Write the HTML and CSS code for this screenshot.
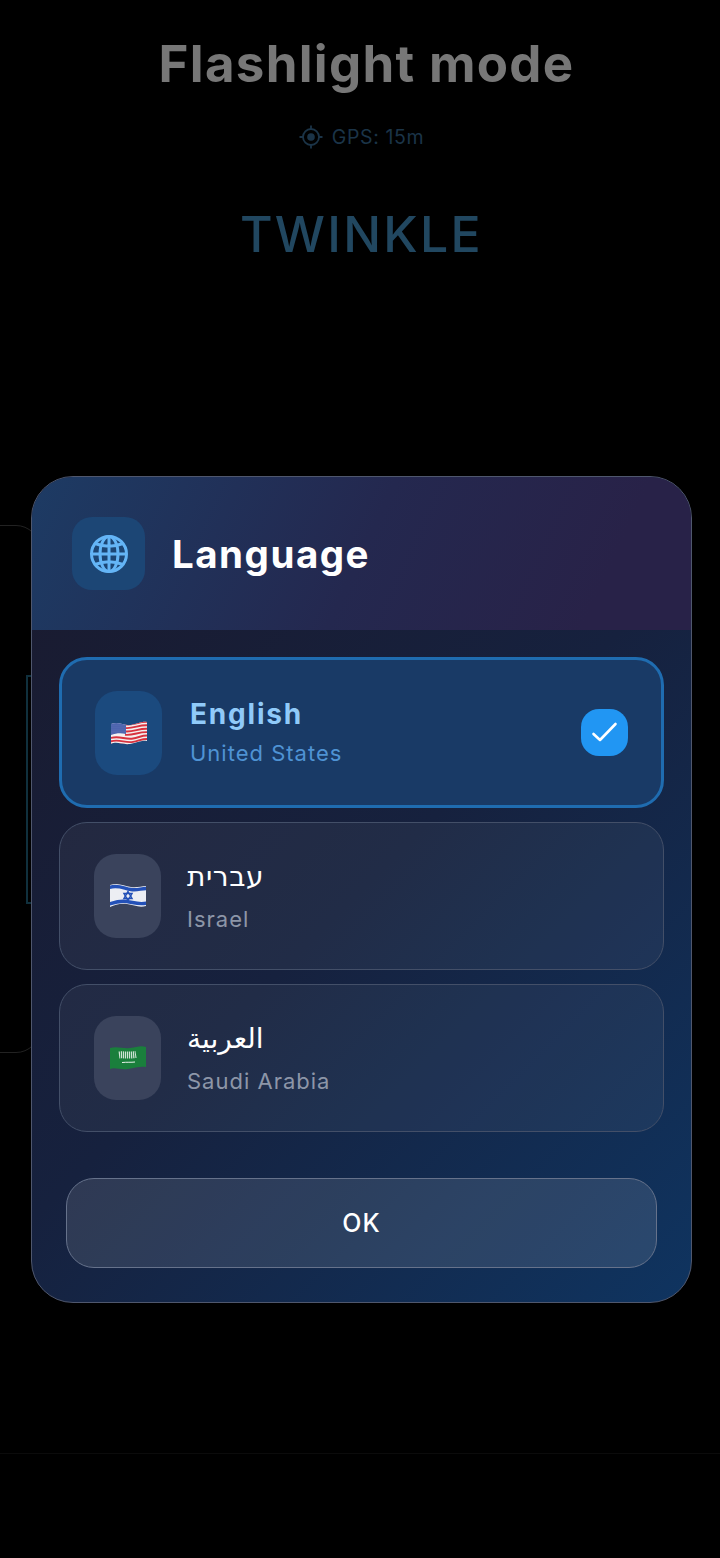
FILE: index.html
```html
<!DOCTYPE html>
<html>

<head>
    <meta charset="utf-8">
    <title>Language</title>
    <link rel="stylesheet" href="styles.css">
</head>

<body>
    <div class="screen">
        <h1 class="mode-title">Flashlight mode</h1>
        <div class="gps">
            <svg class="gps-icon" viewBox="0 0 24 24" fill="none" stroke="currentColor" stroke-width="1.800">
                <circle cx="12" cy="12" r="8"></circle>
                <circle cx="12" cy="12" r="3.8" fill="currentColor" stroke="none"></circle>
                <path d="M12 0.5v3.5M12 20v3.5M0.5 12h3.5M20 12h3.5"></path>
            </svg>
            <span>GPS: 15m</span>
        </div>
        <div class="pattern">TWINKLE</div>

        <div class="back-card"></div>
        <div class="back-bar"></div>
        <div class="bottom-line"></div>
    </div>

    <div class="overlay">
        <div class="dialog">
            <div class="dialog-head">
                <div class="head-icon">
                    <svg viewBox="0 0 40 40" fill="none" stroke="#64b5f6" stroke-width="3">
                        <circle cx="20" cy="20" r="17.5"></circle>
                        <ellipse cx="20" cy="20" rx="9" ry="17.5"></ellipse>
                        <path d="M20 2.5v35M2.500 20h35M6 9.500Q20 15 34 9.500M6 30.500Q20 25 34 30.500"></path>
                    </svg>
                </div>
                <h2 class="head-title">Language</h2>
            </div>

            <div class="dialog-body">
                <div class="lang selected">
                    <div class="flag-box">
                        <svg class="flag" viewBox="0 0 36 26">
                            <defs>
                                <clipPath id="usClip">
                                    <path d="M0 4C8 1 12 6 20 5C27 4 31 1 36 2V21C30 20 26 23 19 24C11 25 6 21 0 24Z"></path>
                                </clipPath>
                                <pattern id="usStars" width="2" height="2" patternUnits="userSpaceOnUse">
                                    <circle cx="1" cy="1" r="0.45" fill="#c9d3f0"></circle>
                                </pattern>
                            </defs>
                            <g clip-path="url(#usClip)">
                                <rect width="36" height="26" fill="#f4f0f0"></rect>
                                <g fill="none" stroke="#d8323f" stroke-width="1.900">
                                    <path d="M14 4.500C22 5.500 29 1 37 2"></path>
                                    <path d="M14 8C22 9 29 4.400 37 5.400"></path>
                                    <path d="M14 11.400C22 12.400 29 7.800 37 8.800"></path>
                                    <path d="M14 14.800C22 15.800 29 11.200 37 12.200"></path>
                                    <path d="M-1 18.200C8 15 14 20 22 18.500C28 17.400 32 15 37 15.600"></path>
                                    <path d="M-1 21.600C8 18.400 14 23.400 22 21.900C28 20.800 32 18.400 37 19"></path>
                                    <path d="M-1 25C8 21.800 14 26.800 22 25.300C28 24.200 32 21.800 37 22.400"></path>
                                </g>
                                <path d="M0 0H15V14C10 12.500 5 13 0 15Z" fill="#3f56a6"></path>
                                <path d="M0 0H15V14C10 12.500 5 13 0 15Z" fill="url(#usStars)"></path>
                            </g>
                        </svg>
                    </div>
                    <div class="lang-text">
                        <div class="lang-name">English</div>
                        <div class="lang-place">United States</div>
                    </div>
                    <div class="check">
                        <svg viewBox="0 0 47 47" fill="none" stroke="#fff" stroke-width="2.600" stroke-linecap="round" stroke-linejoin="round">
                            <path d="M12.500 25L19 31L34.500 15"></path>
                        </svg>
                    </div>
                </div>

                <div class="lang">
                    <div class="flag-box">
                        <svg class="flag" viewBox="0 0 36 26">
                            <defs>
                                <clipPath id="ilClip">
                                    <path d="M0 2C8 -1 14 3 21 4C27 5 31 3 36 3V23C29 25 24 22 17 21C10 20 5 22 0 24Z"></path>
                                </clipPath>
                            </defs>
                            <g clip-path="url(#ilClip)">
                                <rect width="36" height="26" fill="#eceef3"></rect>
                                <g fill="none" stroke="#2451b7" stroke-width="3.400">
                                    <path d="M-1 4.500C8 1.500 14 5.500 21 6.500C27 7.500 31 5.500 37 5.500"></path>
                                    <path d="M-1 21C5 19 10 17.500 17 18.500C24 19.500 29 22 37 20"></path>
                                </g>
                                <g fill="none" stroke="#2451b7" stroke-width="1.500">
                                    <path d="M18 8.500L22 15.500H14Z"></path>
                                    <path d="M18 17.500L22 10.500H14Z"></path>
                                </g>
                            </g>
                        </svg>
                    </div>
                    <div class="lang-text">
                        <div class="lang-name" dir="rtl">עברית</div>
                        <div class="lang-place">Israel</div>
                    </div>
                </div>

                <div class="lang">
                    <div class="flag-box">
                        <svg class="flag" viewBox="0 0 36 26">
                            <path d="M0 3C8 1 13 4 20 3C27 2 31 0 36 2V22C30 21 25 23 18 24C10 25 5 22 0 24Z" fill="#1a7f3c"></path>
                            <path d="M9 10C13 9.500 20 10.500 26 9.500" fill="none" stroke="#cfe3d4" stroke-width="7" stroke-dasharray="1.200 0.800"></path>
                            <path d="M12 17.500C17 17 21 17.500 25 17" fill="none" stroke="#e8f2ea" stroke-width="1"></path>
                        </svg>
                    </div>
                    <div class="lang-text">
                        <div class="lang-name" dir="rtl">العربية</div>
                        <div class="lang-place">Saudi Arabia</div>
                    </div>
                </div>

                <button class="ok-btn">OK</button>
            </div>
        </div>
    </div>
</body>

</html>
```

FILE: styles.css
```css
* {
    box-sizing: border-box;
}

html,
body {
    margin: 0;
    padding: 0;
    height: 100%;
    background-color: #000;
}

body {
    position: relative;
    overflow: hidden;
    font-family: "Inter", "DejaVu Sans", "Noto Sans", sans-serif;
}

.screen {
    height: 1558px;
    padding-top: 34px;
    text-align: center;
}

.mode-title {
    margin: 0;
    height: 60px;
    line-height: 60px;
    padding-left: 13px;
    color: #777;
    font-size: 51px;
    font-weight: 700;
    letter-spacing: 1.3px;
}

.gps {
    display: flex;
    justify-content: center;
    align-items: center;
    gap: 9px;
    height: 24px;
    margin-top: 31px;
    padding-left: 3px;
    color: #1b3448;
    font-size: 19.500px;
    letter-spacing: 0.6px;
}

.gps-icon {
    width: 24px;
    height: 24px;
}

.pattern {
    height: 60px;
    margin-top: 55px;
    padding-left: 3px;
    line-height: 60px;
    color: #214760;
    font-size: 50px;
    font-weight: 500;
    letter-spacing: 2.3px;
}

.back-card {
    position: absolute;
    left: -40px;
    top: 525px;
    width: 80px;
    height: 528px;
    border: 1px solid #222;
    border-radius: 24px;
}

.back-bar {
    position: absolute;
    left: 26px;
    top: 675px;
    width: 10px;
    height: 229px;
    border: 2px solid #10303d;
}

.bottom-line {
    position: absolute;
    left: 0;
    right: 0;
    top: 1453px;
    height: 1px;
    background-color: #0b0b0b;
}

.overlay {
    position: absolute;
    left: 0;
    top: 0;
    width: 100%;
    padding: 476px 28px 0 31px;
}

.dialog {
    height: 827px;
    border: 1.500px solid #4f576d;
    border-radius: 42px;
    overflow: hidden;
    background: linear-gradient(135deg, #1a1a2e 0%, #16213e 50%, #0f3460 100%);
}

.dialog-head {
    display: flex;
    align-items: center;
    gap: 28px;
    height: 153px;
    padding: 0 40px;
    background: linear-gradient(115deg, #1d3b64 0%, #24284f 50%, #282248 85%);
}

.head-icon {
    display: flex;
    justify-content: center;
    align-items: center;
    width: 73px;
    height: 73px;
    border-radius: 20px;
    background-color: #1c4675;
}

.head-icon svg {
    width: 40px;
    height: 40px;
}

.head-title {
    margin: 0 0 0 -1px;
    color: #fff;
    font-size: 38.500px;
    font-weight: 700;
    letter-spacing: 1.5px;
}

.dialog-body {
    padding: 27px 27px 0;
}

.lang {
    display: flex;
    align-items: center;
    height: 148px;
    margin-bottom: 14px;
    padding: 0 33px 0 34px;
    border: 1.500px solid #434f68;
    border-radius: 28px;
    background-color: rgba(255, 255, 255, 0.05);
}

.lang.selected {
    height: 151px;
    padding: 0 33px;
    border: 3px solid #1f6cb0;
    background-color: #193a66;
}

.flag-box {
    display: flex;
    flex: none;
    justify-content: center;
    align-items: center;
    width: 67px;
    height: 84px;
    border-radius: 22px;
    background-color: #3a435c;
}

.selected .flag-box {
    background-color: #1b4a7e;
}

.flag {
    width: 36px;
    height: 26px;
}

.lang-text {
    display: flex;
    flex: 1;
    flex-direction: column;
    align-items: flex-start;
    gap: 13px;
    margin-left: 26px;
    padding-bottom: 2px;
}

.lang-name {
    color: #fff;
    font-size: 28px;
    line-height: 34px;
    letter-spacing: 0.6px;
}

.selected .lang-name {
    color: #90caf9;
    font-weight: 700;
    letter-spacing: 1.8px;
}

.lang-place {
    color: #8d96a8;
    font-size: 22px;
    line-height: 26px;
    letter-spacing: 1px;
}

.selected .lang-place {
    color: #4f93d4;
}

.selected .lang-text {
    gap: 9px;
    margin-left: 28px;
    padding-bottom: 2px;
}

.check {
    flex: none;
    width: 47px;
    height: 47px;
    border-radius: 18px;
    background-color: #2196f3;
}

.check svg {
    display: block;
    width: 47px;
    height: 47px;
}

.ok-btn {
    display: block;
    width: 591px;
    height: 90px;
    margin: 46px 0 0 7px;
    border: 1.500px solid #66728b;
    border-radius: 28px;
    background-color: rgba(255, 255, 255, 0.11);
    color: #fff;
    font-family: "Inter", sans-serif;
    font-size: 25px;
    font-weight: 500;
    letter-spacing: 1px;
}
```
